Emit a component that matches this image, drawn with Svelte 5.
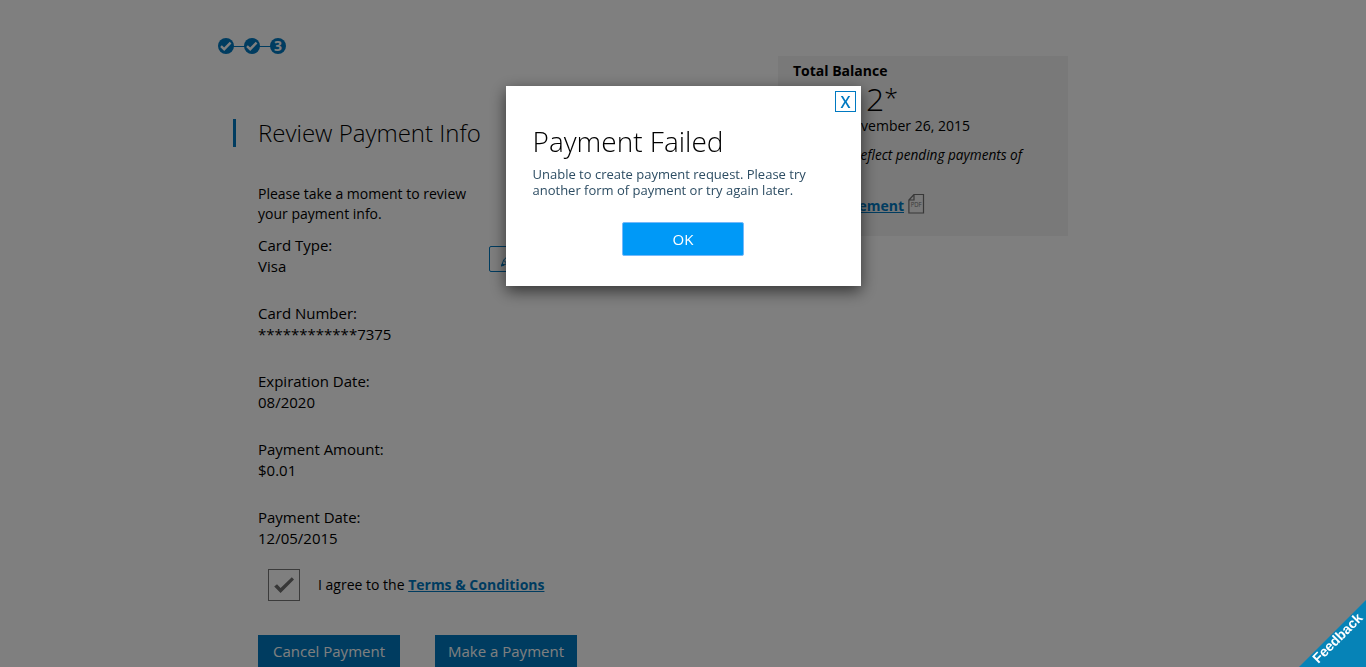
<script>
  const fields = [
    ['Card Type:', 'Visa'],
    ['Card Number:', '************7375'],
    ['Expiration Date:', '08/2020'],
    ['Payment Amount:', '$0.01'],
    ['Payment Date:', '12/05/2015']
  ];
</script>

<div class="page">
  <main>
    <svg class="steps" width="70" height="18" viewBox="0 0 70 18">
      <path d="M9 9.5H60" stroke="#0079c1" stroke-width="1.2" />
      <circle cx="9" cy="9" r="8" fill="#0079c1" />
      <circle cx="35" cy="9" r="8" fill="#0079c1" />
      <circle cx="61" cy="9" r="8" fill="#0079c1" />
      <path d="M4 9.2L7.2 12.2L13.6 5.6M30 9.2L33.2 12.2L39.6 5.6" fill="none" stroke="#fff" stroke-width="2.4" />
      <text x="61" y="14" text-anchor="middle" fill="#fff">3</text>
    </svg>
    <h1>Review Payment Info</h1>
    <div class="details">
      <p class="intro">Please take a moment to review<br />your payment info.</p>
      <div class="fields">
        <dl>
          {#each fields as [label, value]}
            <div class="field">
              <dt>{label}</dt>
              <dd>{value}</dd>
            </div>
          {/each}
        </dl>
        <button class="edit" aria-label="Edit">
          <svg width="15" height="15" viewBox="0 0 15 15" fill="none" stroke="#0079c1" stroke-width="1">
            <path d="M1.5 14L3.6 8.2L10.5 1L14 4.5L7 11.5ZM3.6 8.2L7 11.5" />
            <path d="M1.5 14L2.4 11.4L4.1 13Z" fill="#0079c1" />
          </svg>
        </button>
      </div>
      <div class="agree">
        <span class="box">
          <svg width="22" height="18" viewBox="0 0 22 18"><path d="M1.2 10.5L4 8.3L7.6 12L18.8 1.3L21 3.4L7.6 17Z" fill="#6e6e6e" /></svg>
        </span>
        <span class="terms">I agree to the <a href="#terms">Terms &amp; Conditions</a></span>
      </div>
      <div class="actions">
        <button>Cancel Payment</button>
        <button>Make a Payment</button>
      </div>
    </div>
  </main>
  <aside>
    <h2>Total Balance</h2>
    <div class="amount">2<span>*</span></div>
    <div class="date">November 26, 2015</div>
    <div class="note">reflect pending payments of</div>
    <div class="statement">
      <a href="#statement">Statement</a>
      <svg width="17" height="20" viewBox="0 0 17 20" fill="none" stroke="#707070">
        <path d="M6 .5H15.5V19H.9V6ZM6 .5V6H.9" stroke-width="1.2" />
        <text x="2.7" y="12.7" fill="#777" stroke="none" textLength="11" lengthAdjust="spacingAndGlyphs">PDF</text>
      </svg>
    </div>
  </aside>
</div>

<div class="overlay"></div>

<div class="modal" role="dialog" aria-label="Payment Failed">
  <button class="close">X</button>
  <h2>Payment Failed</h2>
  <p>Unable to create payment request. Please try<br />another form of payment or try again later.</p>
  <button class="ok">OK</button>
</div>

<svg class="feedback" width="67" height="67" viewBox="0 0 67 67">
  <path d="M0 67L67 0V67Z" fill="#0683b7" />
  <text transform="translate(19.2 64) rotate(-45)" textLength="64" fill="#fff">Feedback</text>
</svg>

<style>
  :global(body) {
    background: #fff;
    overflow: hidden;
  }
  .page, .modal {
    font-family: "Open Sans", sans-serif;
    font-size: 14px;
    color: #000;
  }
  .page {
    display: flex;
    height: 667px;
    padding-left: 217px;
    box-sizing: border-box;
    overflow: hidden;
  }
  h1, h2, p, dl, dt, dd { margin: 0; }
  button { font-family: inherit; padding: 0; box-sizing: border-box; }
  main { width: 561px; padding-top: 37px; }
  .steps { display: block; }
  .steps text { font: 700 14px "Open Sans", sans-serif; }
  h1 {
    margin: 64px 0 0 16px;
    border-left: 3px solid #0079c1;
    padding-left: 22px;
    height: 28px;
    line-height: 28px;
    font-size: 24px;
    font-weight: 300;
    white-space: nowrap;
  }
  .details { padding-left: 41px; }
  .intro { margin-top: 37px; line-height: 20px; }
  .fields { display: flex; margin-top: 11px; }
  dl { width: 231px; }
  .field { height: 68px; line-height: 21px; font-size: 15px; }
  .edit {
    width: 90px;
    height: 26px;
    margin-top: 11px;
    border: 1px solid #0079c1;
    border-radius: 2px;
    background: transparent;
    padding-left: 10px;
    text-align: left;
  }
  .edit svg { display: block; margin-top: 1px; }
  .agree { display: flex; align-items: center; margin: -6px 0 0 10px; height: 32px; }
  .box {
    width: 32px;
    height: 32px;
    box-sizing: border-box;
    border: 1px solid #777;
    display: grid;
    place-items: center;
    margin-right: 18px;
  }
  .terms { padding-bottom: 2px; }
  a { color: #0079c1; font-weight: 700; }
  .actions { display: flex; gap: 35px; margin-top: 34px; }
  .actions button {
    width: 142px;
    height: 34px;
    padding-bottom: 2px;
    border: 0;
    background: #0079c1;
    color: #fff;
    font-size: 15px;
  }
  aside {
    width: 290px;
    height: 180px;
    margin-top: 56px;
    padding: 5px 15px;
    box-sizing: border-box;
    background: #f2f2f2;
    white-space: nowrap;
  }
  aside h2 { font-size: 14px; line-height: 20px; }
  .amount { width: 105px; height: 35px; text-align: right; font-size: 32px; line-height: 36px; font-weight: 300; }
  .amount span { font-size: 25px; line-height: 1; vertical-align: 4px; }
  .date { width: 177px; text-align: right; line-height: 20px; }
  .note { width: 229px; margin-top: 10px; text-align: right; font-size: 13.6px; line-height: 18px; font-style: italic; }
  .statement { width: 132px; margin-top: 25px; display: flex; gap: 4px; justify-content: flex-end; line-height: 34px; height: 30px; }
  .statement svg { margin-top: 5px; flex: none; }
  .statement text { font: 6.5px "Open Sans", sans-serif; }
  .overlay { position: fixed; inset: 0; background: rgba(0, 0, 0, 0.5); }
  .modal {
    position: fixed;
    left: 506px;
    top: 86px;
    width: 355px;
    height: 200px;
    box-sizing: border-box;
    padding: 5px 5px 0 26.5px;
    background: #fff;
    box-shadow: 0 5px 15px rgba(0, 0, 0, 0.6);
    display: flex;
    flex-direction: column;
  }
  .close {
    align-self: flex-end;
    width: 21px;
    height: 21px;
    border: 1px solid #0079c1;
    background: #fff;
    color: #0079c1;
    font-size: 16px;
    font-weight: 600;
    line-height: 20px;
  }
  .modal h2 { margin-top: 11px; font-size: 28px; line-height: 36px; font-weight: 300; }
  .modal p { margin-top: 7px; font-size: 13px; line-height: 16px; color: #2d4d63; }
  .ok {
    width: 122px;
    height: 34px;
    margin: 24px 0 0 89.5px;
    border: 1px solid #75b9fa;
    border-radius: 2px;
    background: #0099f7;
    color: #fff;
    font-size: 15px;
  }
  .feedback { position: fixed; right: 0; bottom: 0; }
  .feedback text { font: 700 14px "Liberation Sans", Arial, sans-serif; }
</style>
